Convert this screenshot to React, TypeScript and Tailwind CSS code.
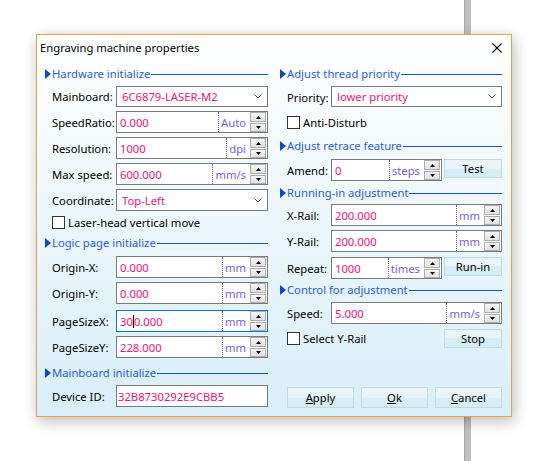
import React from "react";

function Header({ title }: { title: string }) {
  return (
    <div className="flex items-center h-[14px]">
      <svg width="6" height="10" viewBox="0 0 6 10" className="shrink-0">
        <path d="M0 0 L6 5 L0 10 Z" fill="#0f47c8" />
      </svg>
      <span className="ml-[1px] text-[#2a5fd9] whitespace-nowrap leading-[14px]">{title}</span>
      <div className="flex-1 h-px bg-[#1651cf] ml-[1px]" />
    </div>
  );
}

function SpinBtn({ up }: { up?: boolean }) {
  return (
    <div
      className={
        "w-[16px] border border-[#adadad] bg-linear-to-b from-[#f5f5f5] to-[#e1e1e1] flex items-center justify-center " +
        (up ? "h-[10px]" : "h-[9px]")
      }
    >
      <svg width="5" height="3" viewBox="0 0 5 3">
        {up ? <path d="M0 3 L2.5 0 L5 3 Z" fill="#000" /> : <path d="M0 0 L2.5 3 L5 0 Z" fill="#000" />}
      </svg>
    </div>
  );
}

function Spin({
  value,
  unit,
  w,
  focused,
}: {
  value: React.ReactNode;
  unit: string;
  w: string;
  focused?: boolean;
}) {
  return (
    <div
      className={
        "flex items-stretch h-[22px] bg-white border " +
        (focused ? "border-[#0078d7] " : "border-[#7a7a7a] ") +
        w
      }
    >
      <div className="flex-1 flex items-center pl-[3px] text-[#ee137f] whitespace-nowrap">{value}</div>
      <div className="border-l border-dotted border-[#6a4ed6] pl-[2px] pr-[4px] flex items-center text-[#7b5ddf]">
        {unit}
      </div>
      <div className="flex flex-col gap-[1px] mr-[1px]">
        <SpinBtn up />
        <SpinBtn />
      </div>
    </div>
  );
}

function Combo({ value, w, h }: { value: string; w: string; h: string }) {
  return (
    <div className={"flex items-center bg-white border border-[#7a7a7a] " + w + " " + h}>
      <span className="flex-1 pl-[5px] text-[#ee137f]">{value}</span>
      <svg width="8" height="5" viewBox="0 0 8 5" className="mr-[5px]">
        <path d="M0.5 0.5 L4 4 L7.5 0.5" stroke="#4a4a4a" strokeWidth="1" fill="none" />
      </svg>
    </div>
  );
}

function Check({ label }: { label: string }) {
  return (
    <div className="flex items-center">
      <div className="w-[13px] h-[13px] border border-[#333] bg-white" />
      <span className="ml-[3px] text-black">{label}</span>
    </div>
  );
}

function Btn({ children, cls }: { children: React.ReactNode; cls: string }) {
  return (
    <div
      className={
        "border border-[#bddbe6] bg-[linear-gradient(to_bottom,#e9f4f9_50%,#d5edf6_50%)] flex items-center justify-center text-black " +
        cls
      }
    >
      {children}
    </div>
  );
}

function LRow({ label, children, cls }: { label: string; children: React.ReactNode; cls: string }) {
  return (
    <div className={"flex items-center pl-[7px] " + cls}>
      <span className="w-[64px] text-black whitespace-nowrap">{label}</span>
      {children}
    </div>
  );
}

function RRow({ label, children, cls }: { label: string; children: React.ReactNode; cls: string }) {
  return (
    <div className={"flex items-start pl-[7px] " + cls}>
      <span className="w-[44px] h-[22px] flex items-center text-black whitespace-nowrap">{label}</span>
      {children}
    </div>
  );
}

export default function App() {
  return (
    <div className="relative w-[538px] h-[461px] bg-white overflow-hidden pl-[36px] pt-[34px] font-['Noto_Sans',sans-serif] text-[11.25px] leading-[15px]">
      <div className="absolute left-[464px] top-0 w-[7px] h-full bg-[#bfbfbf] border-l border-[#a6a6a6]" />
      <div className="relative z-10 w-[476px] h-[383px] border border-[#e6a24a] bg-linear-to-b from-white to-[#d8eef8] shadow-[2px_4px_14px_rgba(0,0,0,0.28)]">
        <div className="h-[25px] flex items-center justify-between pl-[3px] pr-[9px]">
          <span className="text-black">Engraving machine properties</span>
          <svg width="10" height="10" viewBox="0 0 10 10">
            <path d="M0.5 0.5 L9.5 9.5 M9.5 0.5 L0.5 9.5" stroke="#000" strokeWidth="1.1" />
          </svg>
        </div>
        <div className="flex pt-[7px] pl-[8px] gap-[12px]">
          {/* Left column */}
          <div className="w-[223px] flex flex-col">
            <Header title="Hardware initialize" />
            <LRow label="Mainboard:" cls="mt-[5px]">
              <Combo value="6C6879-LASER-M2" w="w-[152px]" h="h-[21px]" />
            </LRow>
            <LRow label="SpeedRatio:" cls="mt-[4px]">
              <Spin value="0.000" unit="Auto" w="w-[152px]" />
            </LRow>
            <LRow label="Resolution:" cls="mt-[4px]">
              <Spin value="1000" unit="dpi" w="w-[152px]" />
            </LRow>
            <LRow label="Max speed:" cls="mt-[4px]">
              <Spin value="600.000" unit="mm/s" w="w-[152px]" />
            </LRow>
            <LRow label="Coordinate:" cls="mt-[4px]">
              <Combo value="Top-Left" w="w-[152px]" h="h-[22px]" />
            </LRow>
            <div className="mt-[5px] pl-[7px] h-[13px] flex items-center">
              <Check label="Laser-head vertical move" />
            </div>
            <div className="mt-[7px]">
              <Header title="Logic page initialize" />
            </div>
            <LRow label="Origin-X:" cls="mt-[6px]">
              <Spin value="0.000" unit="mm" w="w-[152px]" />
            </LRow>
            <LRow label="Origin-Y:" cls="mt-[4px]">
              <Spin value="0.000" unit="mm" w="w-[152px]" />
            </LRow>
            <LRow label="PageSizeX:" cls="mt-[6px]">
              <Spin
                value={
                  <>
                    30
                    <span className="inline-block w-px h-[13px] bg-black" />
                    0.000
                  </>
                }
                unit="mm"
                w="w-[152px]"
                focused
              />
            </LRow>
            <LRow label="PageSizeY:" cls="mt-[4px]">
              <Spin value="228.000" unit="mm" w="w-[152px]" />
            </LRow>
            <div className="mt-[8px]">
              <Header title="Mainboard initialize" />
            </div>
            <LRow label="Device ID:" cls="mt-[5px]">
              <div className="w-[152px] h-[22px] bg-white border border-[#7a7a7a] flex items-center pl-[1px] text-[#ee137f]">
                32B8730292E9CBB5
              </div>
            </LRow>
          </div>

          {/* Right column */}
          <div className="w-[222px] flex flex-col">
            <Header title="Adjust thread priority" />
            <RRow label="Priority:" cls="mt-[5px] items-center">
              <Combo value="lower priority" w="w-[171px]" h="h-[21px]" />
            </RRow>
            <div className="mt-[8px] pl-[7px] h-[13px] flex items-center">
              <Check label="Anti-Disturb" />
            </div>
            <div className="mt-[10px]">
              <Header title="Adjust retrace feature" />
            </div>
            <RRow label="Amend:" cls="mt-[6px]">
              <Spin value="0" unit="steps" w="w-[111px]" />
              <Btn cls="ml-[2px] w-[58px] h-[19px]">Test</Btn>
            </RRow>
            <div className="mt-[5px]">
              <Header title="Running-in adjustment" />
            </div>
            <RRow label="X-Rail:" cls="mt-[4px]">
              <Spin value="200.000" unit="mm" w="w-[171px]" />
            </RRow>
            <RRow label="Y-Rail:" cls="mt-[4px]">
              <Spin value="200.000" unit="mm" w="w-[171px]" />
            </RRow>
            <RRow label="Repeat:" cls="mt-[5px]">
              <Spin value="1000" unit="times" w="w-[111px]" />
              <Btn cls="ml-[2px] w-[58px] h-[19px]">Run-in</Btn>
            </RRow>
            <div className="mt-[4px]">
              <Header title="Control for adjustment" />
            </div>
            <RRow label="Speed:" cls="mt-[5px]">
              <Spin value="5.000" unit="mm/s" w="w-[171px]" />
            </RRow>
            <div className="mt-[5px] pl-[7px] h-[19px] flex items-center justify-between">
              <Check label="Select Y-Rail" />
              <Btn cls="w-[58px] h-[19px]">Stop</Btn>
            </div>
            <div className="mt-[39px] pl-[7px] flex gap-[7px]">
              <Btn cls="w-[67px] h-[21px]">
                <span>
                  <span className="underline">A</span>pply
                </span>
              </Btn>
              <Btn cls="w-[67px] h-[21px]">
                <span>
                  <span className="underline">O</span>k
                </span>
              </Btn>
              <Btn cls="w-[67px] h-[21px]">
                <span>
                  <span className="underline">C</span>ancel
                </span>
              </Btn>
            </div>
          </div>
        </div>
      </div>
    </div>
  );
}
